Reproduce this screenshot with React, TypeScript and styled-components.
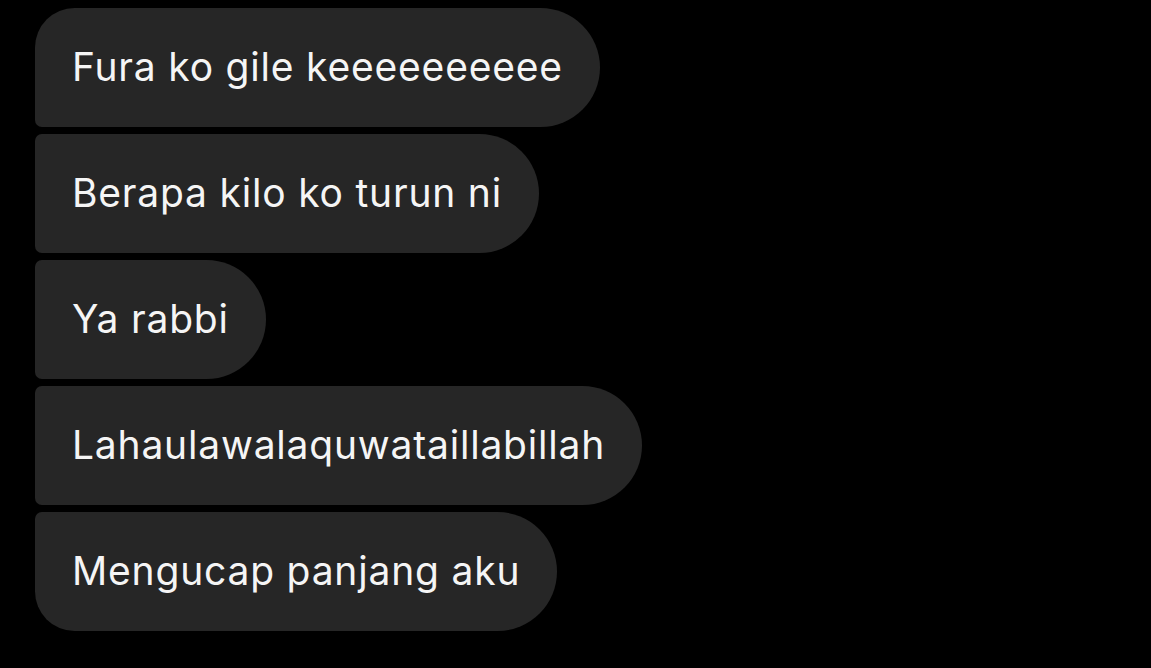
import React from "react";
import styled, { createGlobalStyle } from "styled-components";

const Global = createGlobalStyle`
  html, body { margin: 0; padding: 0; background: #000; }
  body { font-family: Inter, "Noto Sans", sans-serif; }
`;

const Thread = styled.div`
  display: flex;
  flex-direction: column;
  align-items: flex-start;
  gap: 7px;
  padding: 8px 0 0 35px;
  background: #000;
  min-height: 668px;
  box-sizing: border-box;
`;

type Pos = "first" | "middle" | "last";

const Bubble = styled.div<{ $pos: Pos }>`
  display: flex;
  align-items: center;
  box-sizing: border-box;
  height: 119px;
  padding: 0 37px 2px 37px;
  background: #262626;
  color: #f5f5f5;
  font-size: 39px;
  letter-spacing: 0.8px;
  white-space: nowrap;
  border-radius: ${({ $pos }) =>
    $pos === "first"
      ? "40px 60px 60px 7px"
      : $pos === "last"
      ? "7px 60px 60px 40px"
      : "7px 60px 60px 7px"};
`;

const messages = [
  "Fura ko gile keeeeeeeeee",
  "Berapa kilo ko turun ni",
  "Ya rabbi",
  "Lahaulawalaquwataillabillah",
  "Mengucap panjang aku",
];

export default function App() {
  return (
    <>
      <Global />
      <Thread>
        {messages.map((m, i) => (
          <Bubble
            key={i}
            $pos={i === 0 ? "first" : i === messages.length - 1 ? "last" : "middle"}
          >
            {m}
          </Bubble>
        ))}
      </Thread>
    </>
  );
}
